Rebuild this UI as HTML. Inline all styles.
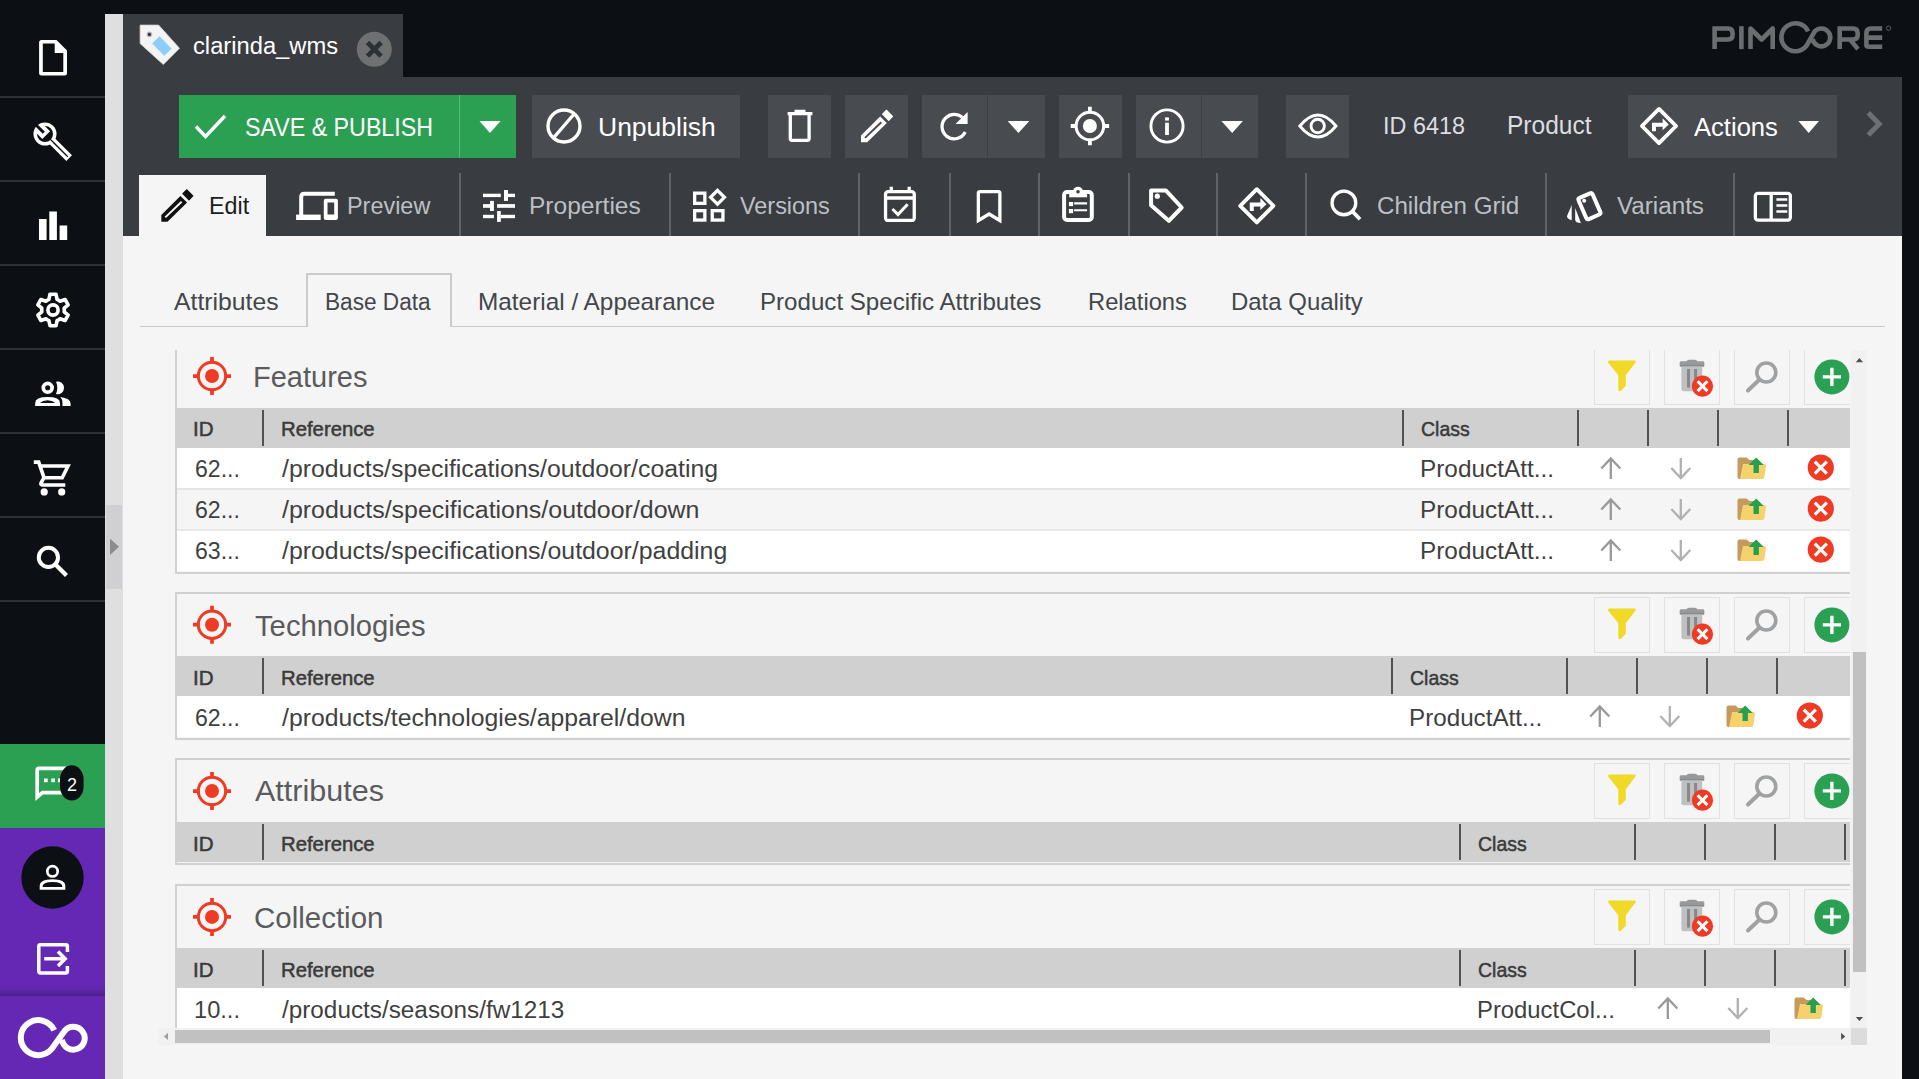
<!DOCTYPE html>
<html><head><meta charset="utf-8">
<style>
*{margin:0;padding:0;box-sizing:border-box}
html,body{width:1919px;height:1079px;overflow:hidden;background:#0c1014;font-family:"Liberation Sans",sans-serif}
.a{position:absolute}
svg{position:absolute;overflow:visible}
.sep{position:absolute;left:0;width:105px;height:2px;background:#2d3134}
.t{position:absolute;white-space:nowrap;transform-origin:0 0}
</style></head><body>
<!-- sidebar -->
<div class="a" id="sb" style="left:0;top:0;width:105px;height:1079px;background:#0c1014">
  <div class="sep" style="top:96px"></div>
  <div class="sep" style="top:180px"></div>
  <div class="sep" style="top:264px"></div>
  <div class="sep" style="top:348px"></div>
  <div class="sep" style="top:432px"></div>
  <div class="sep" style="top:516px"></div>
  <div class="sep" style="top:600px"></div>

<svg style="left:0;top:0" width="105" height="1079" viewBox="0 0 105 1079">
 <g fill="#fff">
  <path fill-rule="evenodd" d="M41.6 39.9H56.5L67 50.4V73.1Q67 75.6 64.5 75.6H41.6Q39.1 75.6 39.1 73.1V42.4Q39.1 39.9 41.6 39.9ZM42.8 43.6V71.9H63.3V52.9H54.7V43.6Z"/>
  <rect x="39" y="219" width="7.6" height="21"/>
  <rect x="49.3" y="211.5" width="7.6" height="28.5"/>
  <rect x="59.6" y="225.5" width="7.6" height="14.5"/>
  <circle cx="44.2" cy="491.9" r="3.6"/><circle cx="61.7" cy="491.9" r="3.6"/>
  <path d="M56 381.8A6.3 6.3 0 1 1 56 393.9Q58.6 387.8 56 381.8Z"/>
  <path fill-rule="evenodd" d="M35.2 406.1V403Q35.2 397.1 47.6 397.1Q60 397.1 60 403V406.1ZM39.8 402.9H55.3Q52 400.3 47.6 400.3Q43 400.3 39.8 402.9Z"/>
  <path d="M60.4 397.1Q70.6 398.5 70.6 403.5V406.1H62.5V403Q62.5 399.5 60.4 397.1Z"/>
 </g>
 <g fill="none" stroke="#fff" stroke-width="3.6">
  <path d="M47.35 300.21 L48.95 299.45 L49.95 294.29 L56.05 294.29 L57.05 299.45 L58.65 300.21 L60.11 301.22 L65.08 299.50 L68.13 304.79 L64.16 308.23 L64.30 310.00 L64.16 311.77 L68.13 315.21 L65.08 320.50 L60.11 318.78 L58.65 319.79 L57.05 320.55 L56.05 325.71 L49.95 325.71 L48.95 320.55 L47.35 319.79 L45.89 318.78 L40.92 320.50 L37.87 315.21 L41.84 311.77 L41.70 310.00 L41.84 308.23 L37.87 304.79 L40.92 299.50 L45.89 301.22Z" stroke-linejoin="round"/>
  <circle cx="53" cy="310" r="5.1"/>
  <circle cx="47.7" cy="387.8" r="4.4" stroke-width="3.7"/>
  <path d="M33.8 462.1H38.7L44 477.7H62.2L68 466H40.2 M44 477.7L41 483Q40.3 485 43 485H65.3"/>
  <circle cx="48.4" cy="557.4" r="9.6" stroke-width="4"/>
  <path d="M55.5 564.5L66.5 575.5" stroke-width="4.2"/>
  <g transform="translate(45 134) rotate(45)">
   <circle r="9.75" stroke-width="3.5"/>
   <rect x="-10" y="-5.5" width="11.7" height="11" fill="#fff" stroke="none"/>
   <rect x="-13" y="-1.5" width="11.3" height="3" fill="#0c1014" stroke="none"/>
   <path d="M9.6 -2.25H32.4V2.25H9.6" stroke-width="3.5"/>
   <path d="M6 0H32.4" stroke="#0c1014" stroke-width="1.1"/>
  </g>
 </g>
</svg>
  <div class="a" style="left:0;top:744px;width:105px;height:84px;background:#2ba052"></div>
  <div class="a" style="left:0;top:828px;width:105px;height:251px;background:#6428b4"></div>

<svg style="left:0;top:744px" width="105" height="335" viewBox="0 744 105 335">
 <g fill="none" stroke="#fff" stroke-width="3.7">
  <path d="M66 768.3H38.9Q37.2 768.3 37.2 770V797L42.5 792.6H62" stroke-linejoin="miter"/>

 </g>
 <g fill="#fff"><rect x="44" y="778.5" width="3.7" height="3.7"/><rect x="51.3" y="778.5" width="3.7" height="3.7"/><rect x="58" y="778.5" width="3.7" height="3.7"/></g>
 <rect x="60" y="765.3" width="23.6" height="35.3" rx="11.8" ry="14" fill="#0c1014"/>
 <circle cx="52.5" cy="877.5" r="31.2" fill="#0c1014"/>
 <circle cx="52.5" cy="871.3" r="5.2" fill="none" stroke="#fff" stroke-width="2.7"/>
 <path fill-rule="evenodd" fill="#fff" d="M39.7 889.7V886Q39.7 879.2 52.5 879.2Q65.3 879.2 65.3 886V889.7ZM42.5 887H62.5Q62.5 882 52.5 882Q42.5 882 42.5 887Z"/>
 <g fill="none" stroke="#fff" stroke-width="3.5">
  <path d="M67.4 952V946.5Q67.4 944.8 65.7 944.8H40.5Q38.8 944.8 38.8 946.5V971.2Q38.8 972.9 40.5 972.9H65.7Q67.4 972.9 67.4 971.2V966"/>
  <path d="M44.2 958.8H65 M58 951.5L65.2 958.8L58 966"/>
 </g>
 <defs><linearGradient id="lg" x1="0" y1="0" x2="0" y2="1"><stop offset="0" stop-color="#6428b4" stop-opacity="0"/><stop offset="1" stop-color="#3e1a70" stop-opacity="0.7"/></linearGradient></defs>
 <rect x="0" y="984" width="105" height="12" fill="url(#lg)"/>
 <g fill="none" stroke="#fff" stroke-width="6">
  <path d="M54.2 1030.3A17.5 17.5 0 1 0 51.7 1048.9L64.5 1031A11.4 11.4 0 1 1 62 1039.7"/>
 </g>
</svg>
<div class="t" style="left:67px;top:775px;font-size:18px;color:#fff">2</div>
</div>
<!-- splitter strip -->
<div class="a" style="left:105px;top:14px;width:18px;height:1065px;background:#dfdfe0"></div>
<div class="a" style="left:106px;top:505px;width:16px;height:84px;background:#d0d0d2"></div>
<svg style="left:0;top:0" width="130" height="600" viewBox="0 0 130 600"><path d="M110 538.8V554.9L119 546.8Z" fill="#8c8c8e"/></svg>
<!-- doc tab -->
<div class="a" style="left:123px;top:14px;width:280px;height:64px;background:#393c40"></div>
<svg style="left:123px;top:14px" width="280" height="64" viewBox="123 14 280 64">
 <path d="M140.1 25.1H158.6L179.5 48.3L163.3 64.5L140.1 43.6Z" fill="#f4f4f4" stroke="#d4d4d4" stroke-width="0.8"/>
 <path d="M159.6 36.2L171.6 48.7L164.2 55.7L152.1 43.6Z" fill="#8ccdf9"/>
 <circle cx="149.4" cy="34.4" r="2.8" fill="#bbb"/><circle cx="149.4" cy="34.4" r="1.6" fill="#333"/>
 <circle cx="374.3" cy="49.3" r="17.5" fill="#6f7071"/>
 <path d="M367.5 42.5L381.1 56.1M381.1 42.5L367.5 56.1" stroke="#2e3134" stroke-width="4.8"/>
</svg>
<!-- toolbar -->
<div class="a" style="left:123px;top:77px;width:1779px;height:159px;background:#393c40"></div>

<!-- toolbar row 1 -->
<div class="a" style="left:179px;top:95px;width:337px;height:63px;background:#2ba052"></div>
<div class="a" style="left:459px;top:95px;width:1px;height:63px;background:#5cba7c"></div>
<div class="a" style="left:532px;top:95px;width:208px;height:63px;background:#484b4f"></div>
<div class="a" style="left:768px;top:95px;width:63px;height:63px;background:#484b4f"></div>
<div class="a" style="left:845px;top:95px;width:63px;height:63px;background:#484b4f"></div>
<div class="a" style="left:922px;top:95px;width:123px;height:63px;background:#484b4f"></div>
<div class="a" style="left:987px;top:95px;width:1px;height:63px;background:#3d4044"></div>
<div class="a" style="left:1059px;top:95px;width:63px;height:63px;background:#484b4f"></div>
<div class="a" style="left:1136px;top:95px;width:122px;height:63px;background:#484b4f"></div>
<div class="a" style="left:1201px;top:95px;width:1px;height:63px;background:#3d4044"></div>
<div class="a" style="left:1286px;top:95px;width:63px;height:63px;background:#484b4f"></div>
<div class="a" style="left:1628px;top:95px;width:209px;height:63px;background:#484b4f"></div>
<svg style="left:123px;top:77px" width="1779" height="159" viewBox="123 77 1779 159">
 <g fill="none" stroke="#fff" stroke-width="3.4">
  <path d="M196 126.5L205.5 136.5L225 116"/>
  <circle cx="564" cy="126" r="16"/><path d="M574.5 113.5L553 138.5"/>
  <path d="M787.6 113.6H812.4M794.5 111.5H805.5M790.3 115V138.5Q790.3 140.3 792 140.3H807.4Q809.1 140.3 809.1 138.5V115" stroke-width="3.3"/>
  
  <g transform="translate(699.7 -79.5)"><path d="M161.3 221.8V215.1L180.4 195.9L187.1 202.4L167.5 221.8Z" fill="#fff" stroke="none"/>
 <path d="M165.3 217.4L181.6 201.7" stroke="#484b4f" stroke-width="2"/>
 <path d="M182.9 193.6L186.9 189.8L192.8 195.8L189 199.8Z" fill="#fff" stroke="#fff" stroke-width="1.2" stroke-linejoin="round"/></g>
  <path d="M964.8 120.5A12.2 12.2 0 1 0 965.2 132" stroke-width="3.3"/>
  <circle cx="1089.9" cy="126" r="13.8" stroke-width="3"/>
  <path d="M1089.9 106.8V113M1089.9 139V145.2M1070.7 126H1077M1102.8 126H1109.1" stroke-width="3.8"/>
  <circle cx="1167" cy="126" r="16.1" stroke-width="2.9"/>
  <path d="M1167 122.7V135" stroke-width="3.8"/>
  <path d="M1299.8 126Q1318 104 1336 126Q1318 148 1299.8 126Z" stroke-width="2.9"/>
  <circle cx="1317.7" cy="126" r="6.7" stroke-width="2.9"/>
  <path d="M1659 108.9L1676.1 126L1659 143.1L1641.9 126Z" stroke-width="3.8" stroke-linejoin="round"/>
  <path d="M1653.95 131.2V124.65H1663.2" stroke-width="4" stroke-linejoin="miter"/>
  <path d="M1868.3 112.8L1879.2 123.9L1868.3 135" stroke="#6e7073" stroke-width="5" stroke-linejoin="miter"/>
 </g>
 <g fill="#fff">
  <path d="M479.5 121H500.6L490 133Z"/>
  <path d="M1007.6 121H1029.3L1018.5 133Z"/>
  <path d="M1221.4 121H1242.9L1232.2 133Z"/>
  <path d="M1798.4 121H1819L1808.7 133Z"/>
  <path d="M967.6 111.9V124H955.5Z"/>
  <circle cx="1089.9" cy="126" r="7"/>
  <rect x="1165.1" y="117.4" width="3.8" height="3.2"/>
  <path d="M1662.6 118.3L1668.7 124.5L1662.6 130.3Z"/>
 </g>
</svg>
<div class="t" style="left:193.24px;top:34px;font-size:24.76px;line-height:24.76px;color:#fff;transform:scaleX(0.9585);">clarinda_wms</div>
<div class="t" style="left:244.78px;top:115px;font-size:25.64px;line-height:25.64px;color:#fff;transform:scaleX(0.9062);">SAVE &amp; PUBLISH</div>
<div class="t" style="left:597.64px;top:114px;font-size:26.45px;line-height:26.45px;color:#fff;transform:scaleX(1.0023);">Unpublish</div>
<div class="t" style="left:1382.84px;top:114px;font-size:24.71px;line-height:24.71px;color:#dcdde0;transform:scaleX(0.9474);">ID 6418</div>
<div class="t" style="left:1507.43px;top:113px;font-size:25.15px;line-height:25.15px;color:#dcdde0;transform:scaleX(0.9759);">Product</div>
<div class="t" style="left:1694.00px;top:115px;font-size:25.73px;line-height:25.73px;color:#fff;transform:scaleX(0.9946);">Actions</div>
<div class="a" style="left:139px;top:175px;width:127px;height:61px;background:#f5f5f5"></div>
<div class="a" style="left:459px;top:173px;width:2px;height:63px;background:#606367"></div>
<div class="a" style="left:669px;top:173px;width:2px;height:63px;background:#606367"></div>
<div class="a" style="left:858px;top:173px;width:2px;height:63px;background:#606367"></div>
<div class="a" style="left:949px;top:173px;width:2px;height:63px;background:#606367"></div>
<div class="a" style="left:1038px;top:173px;width:2px;height:63px;background:#606367"></div>
<div class="a" style="left:1128px;top:173px;width:2px;height:63px;background:#606367"></div>
<div class="a" style="left:1216px;top:173px;width:2px;height:63px;background:#606367"></div>
<div class="a" style="left:1305px;top:173px;width:2px;height:63px;background:#606367"></div>
<div class="a" style="left:1545px;top:173px;width:2px;height:63px;background:#606367"></div>
<div class="a" style="left:1733px;top:173px;width:2px;height:63px;background:#606367"></div>
<svg style="left:0;top:0" width="1919" height="1079" viewBox="0 0 1919 1079">
 <path d="M161.3 221.8V215.1L180.4 195.9L187.1 202.4L167.5 221.8Z" fill="#111"/>
 <path d="M165.3 217.4L181.6 201.7" stroke="#f5f5f5" stroke-width="2"/>
 <path d="M182.9 193.6L186.9 189.8L192.8 195.8L189 199.8Z" fill="#111" stroke="#111" stroke-width="1.2" stroke-linejoin="round"/>
 <g fill="none" stroke="#fff" stroke-width="3.3">
  <path d="M301.2 215V197Q301.2 193.8 304.4 193.8H334.8" stroke-width="4"/>
  
  <rect x="694.65" y="193.15" width="10.2" height="10.2"/>
  <rect x="694.65" y="210.65" width="10.2" height="9.4"/>
  <rect x="712.25" y="210.65" width="10.7" height="9.4"/>
  <path d="M717.5 190.4L724.4 197.3L717.5 204.2L710.6 197.3Z" stroke-linejoin="miter"/>
  <rect x="885.55" y="191.65" width="28.7" height="28.8" rx="2.5"/>
  <path d="M884 198H916 M891.3 186.7V192 M909.2 186.7V192"/>
  <path d="M892.4 209L898 214.5L907.6 204.2" stroke-width="3"/>
  <path d="M978.35 220.5V193.3Q978.35 191.65 980 191.65H998.2Q999.85 191.65 999.85 193.3V220.5L989.1 214Z" stroke-linejoin="miter"/>
  <rect x="1064.1" y="192" width="27.7" height="28" rx="3" stroke-width="4"/>
  <path d="M1074.1 203.4H1087.1M1074.1 210.3H1087.1" stroke-width="2.1"/>
  <path d="M1151.1 190.4H1165.8L1181.7 207.5L1168.8 220.8L1151.1 205.3Z" stroke-width="4" stroke-linejoin="round"/>
  <path d="M1256.8 189.2L1273.4 205.8L1256.8 222.4L1240.2 205.8Z" stroke-width="3.8" stroke-linejoin="round"/>
  <path d="M1251.75 211V204.45H1261" stroke-width="4" stroke-linejoin="miter"/>
  <circle cx="1343.9" cy="202.9" r="11.85"/>
  <path d="M1352.3 211.3L1360 219.3" stroke-width="3.8"/>
  <rect x="-7.65" y="-11.55" width="15.3" height="23.1" rx="2" transform="translate(1589.45 206.2) rotate(-23.5)" stroke-width="4"/>
  <rect x="1755.35" y="193.35" width="35" height="26.7" rx="2.5"/>
  <path d="M1771.2 193V220.5"/>
  <path d="M1776.4 199.5H1787.3M1776.4 205.5H1787.3M1776.4 211.5H1787.3" stroke-width="2.6"/>
 </g>
 <g fill="#fff">
  <rect x="296.1" y="214.6" width="24.6" height="5.4"/><path fill-rule="evenodd" d="M325.7 198.8H336Q337.9 198.8 337.9 200.7V218.1Q337.9 220 336 220H325.7Q323.8 220 323.8 218.1V200.7Q323.8 198.8 325.7 198.8ZM327.5 202.5V214.5H334.2V202.5Z"/>
  <rect x="483" y="193.7" width="17.8" height="3.4"/><rect x="504" y="190" width="4" height="10.9"/><rect x="508" y="193.7" width="7" height="3.4"/>
  <rect x="483" y="204.1" width="7" height="3.7"/><rect x="490" y="200.9" width="3.9" height="10.1"/><rect x="497.1" y="204.1" width="17.9" height="3.7"/>
  <rect x="483" y="214.8" width="10.9" height="3.4"/><rect x="497.1" y="211" width="3.7" height="10.9"/><rect x="500.8" y="214.8" width="14.2" height="3.4"/>
  <rect x="1069.2" y="190" width="17.9" height="7.3"/>
  <circle cx="1078" cy="191.8" r="5.1"/>
  <rect x="1068.9" y="202" width="4.2" height="4.1"/><rect x="1068.9" y="209" width="4.2" height="4.2"/>
  <circle cx="1157.3" cy="196.2" r="2.6"/>
  <path d="M1260.4 198.1L1266.5 204.3L1260.4 210.1Z"/>
  <circle cx="1584.2" cy="200.7" r="2"/>
  <path d="M1571.7 205.1V220.3Q1567 219 1567 216Z"/>
  <path d="M1575.2 208V220Q1575.6 223 1580.9 223Z"/>
 </g>
 <circle cx="1078" cy="191.8" r="1.8" fill="#393c40"/>
</svg>
<div class="t" style="left:208.53px;top:194px;font-size:24.56px;line-height:24.56px;color:#1c1c1c;transform:scaleX(0.9490);">Edit</div>
<div class="t" style="left:347.36px;top:194px;font-size:24.56px;line-height:24.56px;color:#bcc0c5;transform:scaleX(0.9541);">Preview</div>
<div class="t" style="left:529.43px;top:194px;font-size:24.71px;line-height:24.71px;color:#bcc0c5;transform:scaleX(0.9925);">Properties</div>
<div class="t" style="left:740.40px;top:194px;font-size:24.71px;line-height:24.71px;color:#bcc0c5;transform:scaleX(0.9477);">Versions</div>
<div class="t" style="left:1376.89px;top:194px;font-size:24.21px;line-height:24.21px;color:#bcc0c5;transform:scaleX(0.9979);">Children Grid</div>
<div class="t" style="left:1617.20px;top:194px;font-size:24.56px;line-height:24.56px;color:#bcc0c5;transform:scaleX(0.9856);">Variants</div>
<div class="a" id="content" style="left:123px;top:236px;width:1779px;height:843px;background:#f5f5f5"></div>
<div class="a" style="left:140px;top:326px;width:1745px;height:1px;background:#c9c9c9"></div>
<div class="a" style="left:306px;top:273px;width:146px;height:54px;border:2px solid #cbcbcb;border-bottom:none;background:#f5f5f5"></div>
<div class="t" style="left:174.00px;top:290px;font-size:24.71px;line-height:24.71px;color:#43464a;transform:scaleX(1.0023);">Attributes</div>
<div class="t" style="left:324.87px;top:290px;font-size:24.56px;line-height:24.56px;color:#43464a;transform:scaleX(0.9217);">Base Data</div>
<div class="t" style="left:477.97px;top:290px;font-size:24.71px;line-height:24.71px;color:#43464a;transform:scaleX(0.9861);">Material / Appearance</div>
<div class="t" style="left:760.19px;top:290px;font-size:24.71px;line-height:24.71px;color:#43464a;transform:scaleX(0.9758);">Product Specific Attributes</div>
<div class="t" style="left:1088.04px;top:290px;font-size:24.71px;line-height:24.71px;color:#43464a;transform:scaleX(0.9607);">Relations</div>
<div class="t" style="left:1231.46px;top:290px;font-size:24.71px;line-height:24.71px;color:#43464a;transform:scaleX(0.9697);">Data Quality</div>
<div class="a" style="left:0;top:0;width:1919px;height:1079px;clip-path:inset(350px 69px 51px 158px)">
<div class="a" style="left:175px;top:344px;width:1690px;height:230px;border:2px solid #d0d0d0;border-right:none"></div>
<div class="a" style="left:1594px;top:349px;width:56px;height:55.5px;border:1.5px solid #e1e1e1"></div>
<div class="a" style="left:1664px;top:349px;width:56px;height:55.5px;border:1.5px solid #e1e1e1"></div>
<div class="a" style="left:1734px;top:349px;width:56px;height:55.5px;border:1.5px solid #e1e1e1"></div>
<div class="a" style="left:1804px;top:349px;width:56px;height:55.5px;border:1.5px solid #e1e1e1"></div>
<div class="a" style="left:177px;top:408px;width:1690px;height:40px;background:#d0d0d0"></div>
<div class="a" style="left:262px;top:410px;width:2px;height:36px;background:#505254"></div>
<div class="a" style="left:1402px;top:410px;width:2px;height:36px;background:#505254"></div>
<div class="a" style="left:1577px;top:410px;width:2px;height:36px;background:#505254"></div>
<div class="a" style="left:1647px;top:410px;width:2px;height:36px;background:#505254"></div>
<div class="a" style="left:1717px;top:410px;width:2px;height:36px;background:#505254"></div>
<div class="a" style="left:1787px;top:410px;width:2px;height:36px;background:#505254"></div>
<div class="a" style="left:177px;top:448px;width:1690px;height:41px;background:#ffffff"></div>
<div class="a" style="left:177px;top:489px;width:1690px;height:41px;background:#f5f5f5"></div>
<div class="a" style="left:177px;top:488px;width:1690px;height:2px;background:#e6e6e6"></div>
<div class="a" style="left:177px;top:530px;width:1690px;height:41px;background:#ffffff"></div>
<div class="a" style="left:177px;top:529px;width:1690px;height:2px;background:#e6e6e6"></div>
<div class="t" style="left:252.74px;top:363px;font-size:29.07px;line-height:29.07px;color:#5a5b5d;transform:scaleX(0.9979);">Features</div>
<div class="t" style="left:192.95px;top:419px;font-size:20.35px;line-height:20.35px;color:#3a3a3a;transform:scaleX(1.0093);-webkit-text-stroke:0.5px #3a3a3a;">ID</div>
<div class="t" style="left:280.95px;top:419px;font-size:20.35px;line-height:20.35px;color:#3a3a3a;transform:scaleX(0.9979);-webkit-text-stroke:0.5px #3a3a3a;">Reference</div>
<div class="t" style="left:1420.57px;top:419px;font-size:20.06px;line-height:20.06px;color:#3a3a3a;transform:scaleX(0.9723);-webkit-text-stroke:0.5px #3a3a3a;">Class</div>
<div class="t" style="left:194.54px;top:457px;font-size:24.36px;line-height:24.36px;color:#3f3f3f;transform:scaleX(0.9475);">62...</div>
<div class="t" style="left:281.80px;top:457px;font-size:24.41px;line-height:24.41px;color:#3f3f3f;transform:scaleX(1.0171);">/products/specifications/outdoor/coating</div>
<div class="t" style="left:1419.55px;top:457px;font-size:24.71px;line-height:24.71px;color:#3f3f3f;transform:scaleX(0.9858);">ProductAtt...</div>
<div class="t" style="left:194.54px;top:498px;font-size:24.36px;line-height:24.36px;color:#3f3f3f;transform:scaleX(0.9475);">62...</div>
<div class="t" style="left:281.80px;top:498px;font-size:24.41px;line-height:24.41px;color:#3f3f3f;transform:scaleX(1.0223);">/products/specifications/outdoor/down</div>
<div class="t" style="left:1419.55px;top:498px;font-size:24.71px;line-height:24.71px;color:#3f3f3f;transform:scaleX(0.9858);">ProductAtt...</div>
<div class="t" style="left:194.54px;top:539px;font-size:24.36px;line-height:24.36px;color:#3f3f3f;transform:scaleX(0.9475);">63...</div>
<div class="t" style="left:281.80px;top:539px;font-size:24.41px;line-height:24.41px;color:#3f3f3f;transform:scaleX(1.0192);">/products/specifications/outdoor/padding</div>
<div class="t" style="left:1419.55px;top:539px;font-size:24.71px;line-height:24.71px;color:#3f3f3f;transform:scaleX(0.9858);">ProductAtt...</div>
<svg style="left:0;top:0" width="1919" height="1079" viewBox="0 0 1919 1079">
 <g transform="translate(212 376.0)"><circle r="13.7" fill="none" stroke="#ef3b24" stroke-width="2.95"/><circle r="7" fill="#ef3b24"/><path d="M0 -19V-12.5M0 12.5V19M-19 0H-12.5M12.5 0H19" stroke="#ef3b24" stroke-width="3.75"/></g>
 <path transform="translate(0 349.0)" d="M1609.2 11.5H1634.6Q1636.6 11.9 1635.3 13.8L1625.8 26.2V36.8L1620.6 42Q1618.3 43 1618.3 40.6V26.2L1608.3 13.8Q1607.4 11.9 1609.2 11.5Z" fill="#f0da27"/>
 <g transform="translate(0 349.0)"><path d="M1686.6 12.2Q1687 10.7 1689 10.7H1695Q1697 10.7 1697.4 12.2H1703.2Q1704.3 12.5 1704.3 13.6V16.6H1679.7V13.6Q1679.7 12.5 1680.8 12.2Z" fill="#98999b"/><rect x="1679.8" y="16.3" width="24.4" height="1.3" fill="#6f7072"/><path d="M1681.4 17.6H1702.2V40.3Q1702.2 42.3 1700.2 42.3H1683.4Q1681.4 42.3 1681.4 40.3Z" fill="#bfc0c2"/><rect x="1687" y="20" width="3" height="18.6" fill="#87888a"/><rect x="1694.1" y="20" width="3" height="18.6" fill="#87888a"/><circle cx="1702.5" cy="37.2" r="10.6" fill="#ef3b24"/><path d="M1697.6 32.3L1707.4 42.1M1707.4 32.3L1697.6 42.1" stroke="#fff" stroke-width="3"/></g>
 <g transform="translate(0 349.0)" fill="none" stroke="#a0a1a3"><circle cx="1766.3" cy="23.5" r="9.5" stroke-width="3.6"/><path d="M1758.8 31.2L1748 41.5" stroke-width="4" stroke-linecap="round"/></g>
 <g transform="translate(0 349.0)"><circle cx="1831.9" cy="27.9" r="17.5" fill="#2aa052"/><path d="M1831.9 18.8V37M1822.8 27.9H1841" stroke="#fff" stroke-width="3.4"/></g>
 <g transform="translate(0 448)" fill="none" stroke-width="2.3"><path d="M1610.8 31V10.5M1601.3 20.5L1610.8 10.5L1620.3 20.5" stroke="#98999b"/><path d="M1680.8 10V30M1671.3 20L1680.8 30L1690.3 20" stroke="#b0b1b3"/><g stroke="none"><path d="M1737.5 11.5Q1737.5 9.5 1739.5 9.5H1746.5 L1749.5 12H1757.5 V27Q1757.5 31 1755.5 31H1739.5 Q1737.5 31 1737.5 29Z" fill="#c49a5e"/><path d="M1743.0 16H1764.0 Q1766.0 16 1766.0 18L1764.5 28.5Q1764.1 31 1762.0 31H1740.0 Z" fill="#f7d16c"/><path d="M1756.2 9.5L1763.7 16.9H1758.9 V25H1753.5 V16.9H1748.6 Z" fill="#27a04d"/></g><circle cx="1820.8" cy="19.6" r="13.1" fill="#ef3b24" stroke="none"/><path d="M1814.8 13.6L1826.8 25.6M1826.8 13.6L1814.8 25.6" stroke="#fff" stroke-width="3.2"/></g>
 <g transform="translate(0 489)" fill="none" stroke-width="2.3"><path d="M1610.8 31V10.5M1601.3 20.5L1610.8 10.5L1620.3 20.5" stroke="#98999b"/><path d="M1680.8 10V30M1671.3 20L1680.8 30L1690.3 20" stroke="#b0b1b3"/><g stroke="none"><path d="M1737.5 11.5Q1737.5 9.5 1739.5 9.5H1746.5 L1749.5 12H1757.5 V27Q1757.5 31 1755.5 31H1739.5 Q1737.5 31 1737.5 29Z" fill="#c49a5e"/><path d="M1743.0 16H1764.0 Q1766.0 16 1766.0 18L1764.5 28.5Q1764.1 31 1762.0 31H1740.0 Z" fill="#f7d16c"/><path d="M1756.2 9.5L1763.7 16.9H1758.9 V25H1753.5 V16.9H1748.6 Z" fill="#27a04d"/></g><circle cx="1820.8" cy="19.6" r="13.1" fill="#ef3b24" stroke="none"/><path d="M1814.8 13.6L1826.8 25.6M1826.8 13.6L1814.8 25.6" stroke="#fff" stroke-width="3.2"/></g>
 <g transform="translate(0 530)" fill="none" stroke-width="2.3"><path d="M1610.8 31V10.5M1601.3 20.5L1610.8 10.5L1620.3 20.5" stroke="#98999b"/><path d="M1680.8 10V30M1671.3 20L1680.8 30L1690.3 20" stroke="#b0b1b3"/><g stroke="none"><path d="M1737.5 11.5Q1737.5 9.5 1739.5 9.5H1746.5 L1749.5 12H1757.5 V27Q1757.5 31 1755.5 31H1739.5 Q1737.5 31 1737.5 29Z" fill="#c49a5e"/><path d="M1743.0 16H1764.0 Q1766.0 16 1766.0 18L1764.5 28.5Q1764.1 31 1762.0 31H1740.0 Z" fill="#f7d16c"/><path d="M1756.2 9.5L1763.7 16.9H1758.9 V25H1753.5 V16.9H1748.6 Z" fill="#27a04d"/></g><circle cx="1820.8" cy="19.6" r="13.1" fill="#ef3b24" stroke="none"/><path d="M1814.8 13.6L1826.8 25.6M1826.8 13.6L1814.8 25.6" stroke="#fff" stroke-width="3.2"/></g>
</svg>
<div class="a" style="left:175px;top:592px;width:1690px;height:148px;border:2px solid #d0d0d0;border-right:none"></div>
<div class="a" style="left:1594px;top:597px;width:56px;height:55.5px;border:1.5px solid #e1e1e1"></div>
<div class="a" style="left:1664px;top:597px;width:56px;height:55.5px;border:1.5px solid #e1e1e1"></div>
<div class="a" style="left:1734px;top:597px;width:56px;height:55.5px;border:1.5px solid #e1e1e1"></div>
<div class="a" style="left:1804px;top:597px;width:56px;height:55.5px;border:1.5px solid #e1e1e1"></div>
<div class="a" style="left:177px;top:656px;width:1690px;height:40px;background:#d0d0d0"></div>
<div class="a" style="left:262px;top:658px;width:2px;height:36px;background:#505254"></div>
<div class="a" style="left:1391px;top:658px;width:2px;height:36px;background:#505254"></div>
<div class="a" style="left:1566px;top:658px;width:2px;height:36px;background:#505254"></div>
<div class="a" style="left:1636px;top:658px;width:2px;height:36px;background:#505254"></div>
<div class="a" style="left:1706px;top:658px;width:2px;height:36px;background:#505254"></div>
<div class="a" style="left:1776px;top:658px;width:2px;height:36px;background:#505254"></div>
<div class="a" style="left:177px;top:696px;width:1690px;height:41px;background:#ffffff"></div>
<div class="t" style="left:254.80px;top:611px;font-size:30.09px;line-height:30.09px;color:#5a5b5d;transform:scaleX(0.9720);">Technologies</div>
<div class="t" style="left:192.95px;top:668px;font-size:20.35px;line-height:20.35px;color:#3a3a3a;transform:scaleX(1.0093);-webkit-text-stroke:0.5px #3a3a3a;">ID</div>
<div class="t" style="left:280.95px;top:668px;font-size:20.35px;line-height:20.35px;color:#3a3a3a;transform:scaleX(0.9979);-webkit-text-stroke:0.5px #3a3a3a;">Reference</div>
<div class="t" style="left:1409.57px;top:668px;font-size:20.06px;line-height:20.06px;color:#3a3a3a;transform:scaleX(0.9723);-webkit-text-stroke:0.5px #3a3a3a;">Class</div>
<div class="t" style="left:194.54px;top:706px;font-size:24.36px;line-height:24.36px;color:#3f3f3f;transform:scaleX(0.9475);">62...</div>
<div class="t" style="left:281.80px;top:706px;font-size:24.41px;line-height:24.41px;color:#3f3f3f;transform:scaleX(1.0149);">/products/technologies/apparel/down</div>
<div class="t" style="left:1408.55px;top:706px;font-size:24.71px;line-height:24.71px;color:#3f3f3f;transform:scaleX(0.9798);">ProductAtt...</div>
<svg style="left:0;top:0" width="1919" height="1079" viewBox="0 0 1919 1079">
 <g transform="translate(212 624.7)"><circle r="13.7" fill="none" stroke="#ef3b24" stroke-width="2.95"/><circle r="7" fill="#ef3b24"/><path d="M0 -19V-12.5M0 12.5V19M-19 0H-12.5M12.5 0H19" stroke="#ef3b24" stroke-width="3.75"/></g>
 <path transform="translate(0 597.0)" d="M1609.2 11.5H1634.6Q1636.6 11.9 1635.3 13.8L1625.8 26.2V36.8L1620.6 42Q1618.3 43 1618.3 40.6V26.2L1608.3 13.8Q1607.4 11.9 1609.2 11.5Z" fill="#f0da27"/>
 <g transform="translate(0 597.0)"><path d="M1686.6 12.2Q1687 10.7 1689 10.7H1695Q1697 10.7 1697.4 12.2H1703.2Q1704.3 12.5 1704.3 13.6V16.6H1679.7V13.6Q1679.7 12.5 1680.8 12.2Z" fill="#98999b"/><rect x="1679.8" y="16.3" width="24.4" height="1.3" fill="#6f7072"/><path d="M1681.4 17.6H1702.2V40.3Q1702.2 42.3 1700.2 42.3H1683.4Q1681.4 42.3 1681.4 40.3Z" fill="#bfc0c2"/><rect x="1687" y="20" width="3" height="18.6" fill="#87888a"/><rect x="1694.1" y="20" width="3" height="18.6" fill="#87888a"/><circle cx="1702.5" cy="37.2" r="10.6" fill="#ef3b24"/><path d="M1697.6 32.3L1707.4 42.1M1707.4 32.3L1697.6 42.1" stroke="#fff" stroke-width="3"/></g>
 <g transform="translate(0 597.0)" fill="none" stroke="#a0a1a3"><circle cx="1766.3" cy="23.5" r="9.5" stroke-width="3.6"/><path d="M1758.8 31.2L1748 41.5" stroke-width="4" stroke-linecap="round"/></g>
 <g transform="translate(0 597.0)"><circle cx="1831.9" cy="27.9" r="17.5" fill="#2aa052"/><path d="M1831.9 18.8V37M1822.8 27.9H1841" stroke="#fff" stroke-width="3.4"/></g>
 <g transform="translate(0 696)" fill="none" stroke-width="2.3"><path d="M1599.8 31V10.5M1590.3 20.5L1599.8 10.5L1609.3 20.5" stroke="#98999b"/><path d="M1669.8 10V30M1660.3 20L1669.8 30L1679.3 20" stroke="#b0b1b3"/><g stroke="none"><path d="M1726.5 11.5Q1726.5 9.5 1728.5 9.5H1735.5 L1738.5 12H1746.5 V27Q1746.5 31 1744.5 31H1728.5 Q1726.5 31 1726.5 29Z" fill="#c49a5e"/><path d="M1732.0 16H1753.0 Q1755.0 16 1755.0 18L1753.5 28.5Q1753.1 31 1751.0 31H1729.0 Z" fill="#f7d16c"/><path d="M1745.2 9.5L1752.7 16.9H1747.9 V25H1742.5 V16.9H1737.6 Z" fill="#27a04d"/></g><circle cx="1809.8" cy="19.6" r="13.1" fill="#ef3b24" stroke="none"/><path d="M1803.8 13.6L1815.8 25.6M1815.8 13.6L1803.8 25.6" stroke="#fff" stroke-width="3.2"/></g>
</svg>
<div class="a" style="left:175px;top:758px;width:1690px;height:107px;border:2px solid #d0d0d0;border-right:none"></div>
<div class="a" style="left:1594px;top:763px;width:56px;height:55.5px;border:1.5px solid #e1e1e1"></div>
<div class="a" style="left:1664px;top:763px;width:56px;height:55.5px;border:1.5px solid #e1e1e1"></div>
<div class="a" style="left:1734px;top:763px;width:56px;height:55.5px;border:1.5px solid #e1e1e1"></div>
<div class="a" style="left:1804px;top:763px;width:56px;height:55.5px;border:1.5px solid #e1e1e1"></div>
<div class="a" style="left:177px;top:822px;width:1690px;height:40px;background:#d0d0d0"></div>
<div class="a" style="left:262px;top:824px;width:2px;height:36px;background:#505254"></div>
<div class="a" style="left:1459px;top:824px;width:2px;height:36px;background:#505254"></div>
<div class="a" style="left:1634px;top:824px;width:2px;height:36px;background:#505254"></div>
<div class="a" style="left:1704px;top:824px;width:2px;height:36px;background:#505254"></div>
<div class="a" style="left:1774px;top:824px;width:2px;height:36px;background:#505254"></div>
<div class="a" style="left:1844px;top:824px;width:2px;height:36px;background:#505254"></div>
<div class="t" style="left:254.80px;top:777px;font-size:28.63px;line-height:28.63px;color:#5a5b5d;transform:scaleX(1.0666);">Attributes</div>
<div class="t" style="left:192.95px;top:834px;font-size:20.35px;line-height:20.35px;color:#3a3a3a;transform:scaleX(1.0093);-webkit-text-stroke:0.5px #3a3a3a;">ID</div>
<div class="t" style="left:280.95px;top:834px;font-size:20.35px;line-height:20.35px;color:#3a3a3a;transform:scaleX(0.9979);-webkit-text-stroke:0.5px #3a3a3a;">Reference</div>
<div class="t" style="left:1477.57px;top:834px;font-size:20.06px;line-height:20.06px;color:#3a3a3a;transform:scaleX(0.9723);-webkit-text-stroke:0.5px #3a3a3a;">Class</div>
<svg style="left:0;top:0" width="1919" height="1079" viewBox="0 0 1919 1079">
 <g transform="translate(212 791.0)"><circle r="13.7" fill="none" stroke="#ef3b24" stroke-width="2.95"/><circle r="7" fill="#ef3b24"/><path d="M0 -19V-12.5M0 12.5V19M-19 0H-12.5M12.5 0H19" stroke="#ef3b24" stroke-width="3.75"/></g>
 <path transform="translate(0 763.0)" d="M1609.2 11.5H1634.6Q1636.6 11.9 1635.3 13.8L1625.8 26.2V36.8L1620.6 42Q1618.3 43 1618.3 40.6V26.2L1608.3 13.8Q1607.4 11.9 1609.2 11.5Z" fill="#f0da27"/>
 <g transform="translate(0 763.0)"><path d="M1686.6 12.2Q1687 10.7 1689 10.7H1695Q1697 10.7 1697.4 12.2H1703.2Q1704.3 12.5 1704.3 13.6V16.6H1679.7V13.6Q1679.7 12.5 1680.8 12.2Z" fill="#98999b"/><rect x="1679.8" y="16.3" width="24.4" height="1.3" fill="#6f7072"/><path d="M1681.4 17.6H1702.2V40.3Q1702.2 42.3 1700.2 42.3H1683.4Q1681.4 42.3 1681.4 40.3Z" fill="#bfc0c2"/><rect x="1687" y="20" width="3" height="18.6" fill="#87888a"/><rect x="1694.1" y="20" width="3" height="18.6" fill="#87888a"/><circle cx="1702.5" cy="37.2" r="10.6" fill="#ef3b24"/><path d="M1697.6 32.3L1707.4 42.1M1707.4 32.3L1697.6 42.1" stroke="#fff" stroke-width="3"/></g>
 <g transform="translate(0 763.0)" fill="none" stroke="#a0a1a3"><circle cx="1766.3" cy="23.5" r="9.5" stroke-width="3.6"/><path d="M1758.8 31.2L1748 41.5" stroke-width="4" stroke-linecap="round"/></g>
 <g transform="translate(0 763.0)"><circle cx="1831.9" cy="27.9" r="17.5" fill="#2aa052"/><path d="M1831.9 18.8V37M1822.8 27.9H1841" stroke="#fff" stroke-width="3.4"/></g>
</svg>
<div class="a" style="left:175px;top:884px;width:1690px;height:148px;border:2px solid #d0d0d0;border-right:none"></div>
<div class="a" style="left:1594px;top:889px;width:56px;height:55.5px;border:1.5px solid #e1e1e1"></div>
<div class="a" style="left:1664px;top:889px;width:56px;height:55.5px;border:1.5px solid #e1e1e1"></div>
<div class="a" style="left:1734px;top:889px;width:56px;height:55.5px;border:1.5px solid #e1e1e1"></div>
<div class="a" style="left:1804px;top:889px;width:56px;height:55.5px;border:1.5px solid #e1e1e1"></div>
<div class="a" style="left:177px;top:948px;width:1690px;height:40px;background:#d0d0d0"></div>
<div class="a" style="left:262px;top:950px;width:2px;height:36px;background:#505254"></div>
<div class="a" style="left:1459px;top:950px;width:2px;height:36px;background:#505254"></div>
<div class="a" style="left:1634px;top:950px;width:2px;height:36px;background:#505254"></div>
<div class="a" style="left:1704px;top:950px;width:2px;height:36px;background:#505254"></div>
<div class="a" style="left:1774px;top:950px;width:2px;height:36px;background:#505254"></div>
<div class="a" style="left:1844px;top:950px;width:2px;height:36px;background:#505254"></div>
<div class="a" style="left:177px;top:988px;width:1690px;height:41px;background:#ffffff"></div>
<div class="t" style="left:253.77px;top:903px;font-size:30.37px;line-height:30.37px;color:#5a5b5d;transform:scaleX(0.9707);">Collection</div>
<div class="t" style="left:192.95px;top:960px;font-size:20.35px;line-height:20.35px;color:#3a3a3a;transform:scaleX(1.0093);-webkit-text-stroke:0.5px #3a3a3a;">ID</div>
<div class="t" style="left:280.95px;top:960px;font-size:20.35px;line-height:20.35px;color:#3a3a3a;transform:scaleX(0.9979);-webkit-text-stroke:0.5px #3a3a3a;">Reference</div>
<div class="t" style="left:1477.57px;top:960px;font-size:20.06px;line-height:20.06px;color:#3a3a3a;transform:scaleX(0.9723);-webkit-text-stroke:0.5px #3a3a3a;">Class</div>
<div class="t" style="left:193.50px;top:998px;font-size:24.71px;line-height:24.71px;color:#3f3f3f;transform:scaleX(0.9567);">10...</div>
<div class="t" style="left:281.80px;top:998px;font-size:24.41px;line-height:24.41px;color:#3f3f3f;transform:scaleX(0.9956);">/products/seasons/fw1213</div>
<div class="t" style="left:1476.55px;top:998px;font-size:24.71px;line-height:24.71px;color:#3f3f3f;transform:scaleX(0.9650);">ProductCol...</div>
<svg style="left:0;top:0" width="1919" height="1079" viewBox="0 0 1919 1079">
 <g transform="translate(212 916.9)"><circle r="13.7" fill="none" stroke="#ef3b24" stroke-width="2.95"/><circle r="7" fill="#ef3b24"/><path d="M0 -19V-12.5M0 12.5V19M-19 0H-12.5M12.5 0H19" stroke="#ef3b24" stroke-width="3.75"/></g>
 <path transform="translate(0 889.0)" d="M1609.2 11.5H1634.6Q1636.6 11.9 1635.3 13.8L1625.8 26.2V36.8L1620.6 42Q1618.3 43 1618.3 40.6V26.2L1608.3 13.8Q1607.4 11.9 1609.2 11.5Z" fill="#f0da27"/>
 <g transform="translate(0 889.0)"><path d="M1686.6 12.2Q1687 10.7 1689 10.7H1695Q1697 10.7 1697.4 12.2H1703.2Q1704.3 12.5 1704.3 13.6V16.6H1679.7V13.6Q1679.7 12.5 1680.8 12.2Z" fill="#98999b"/><rect x="1679.8" y="16.3" width="24.4" height="1.3" fill="#6f7072"/><path d="M1681.4 17.6H1702.2V40.3Q1702.2 42.3 1700.2 42.3H1683.4Q1681.4 42.3 1681.4 40.3Z" fill="#bfc0c2"/><rect x="1687" y="20" width="3" height="18.6" fill="#87888a"/><rect x="1694.1" y="20" width="3" height="18.6" fill="#87888a"/><circle cx="1702.5" cy="37.2" r="10.6" fill="#ef3b24"/><path d="M1697.6 32.3L1707.4 42.1M1707.4 32.3L1697.6 42.1" stroke="#fff" stroke-width="3"/></g>
 <g transform="translate(0 889.0)" fill="none" stroke="#a0a1a3"><circle cx="1766.3" cy="23.5" r="9.5" stroke-width="3.6"/><path d="M1758.8 31.2L1748 41.5" stroke-width="4" stroke-linecap="round"/></g>
 <g transform="translate(0 889.0)"><circle cx="1831.9" cy="27.9" r="17.5" fill="#2aa052"/><path d="M1831.9 18.8V37M1822.8 27.9H1841" stroke="#fff" stroke-width="3.4"/></g>
 <g transform="translate(0 988)" fill="none" stroke-width="2.3"><path d="M1667.8 31V10.5M1658.3 20.5L1667.8 10.5L1677.3 20.5" stroke="#98999b"/><path d="M1737.8 10V30M1728.3 20L1737.8 30L1747.3 20" stroke="#b0b1b3"/><g stroke="none"><path d="M1794.5 11.5Q1794.5 9.5 1796.5 9.5H1803.5 L1806.5 12H1814.5 V27Q1814.5 31 1812.5 31H1796.5 Q1794.5 31 1794.5 29Z" fill="#c49a5e"/><path d="M1800.0 16H1821.0 Q1823.0 16 1823.0 18L1821.5 28.5Q1821.1 31 1819.0 31H1797.0 Z" fill="#f7d16c"/><path d="M1813.2 9.5L1820.7 16.9H1815.9 V25H1810.5 V16.9H1805.6 Z" fill="#27a04d"/></g></g>
</svg>
</div>
<div class="a" style="left:1851px;top:350px;width:16px;height:678px;background:#f1f1f1"></div>
<div class="a" style="left:1853px;top:652px;width:13px;height:320px;background:#c1c1c1"></div>
<div class="a" style="left:158px;top:1028px;width:1693px;height:17px;background:#f1f1f1"></div>
<div class="a" style="left:175px;top:1030px;width:1595px;height:13px;background:#c1c1c1"></div>
<div class="a" style="left:1851px;top:1028px;width:16px;height:17px;background:#dcdcdc"></div>
<svg style="left:0;top:0" width="1919" height="1079" viewBox="0 0 1919 1079" fill="#505050">
 <path d="M1855.8 362.2H1863.1L1859.4 358Z"/>
 <path d="M1855.8 1016.9H1863.1L1859.4 1021.1Z"/>
 <path d="M1841.1 1032.8V1039.9L1845.2 1036.4Z"/>
 <path d="M168 1032.8V1039.9L163.8 1036.4Z" fill="#a0a0a0"/>
</svg>
<svg style="left:0;top:0" width="1919" height="80" viewBox="0 0 1919 80" fill="none" stroke="#6b6e71" stroke-width="4.6">
 <path d="M1714.6 49.1V28.5H1728Q1732.6 28.5 1732.6 33.5V34.5Q1732.6 39.5 1728 39.5H1715"/>
 <path d="M1741.4 26.2V49.1"/>
 <path d="M1750.5 49.1V28.5L1761.6 39.5L1772.7 28.5V49.1" stroke-linejoin="round"/>
 <path d="M1808.1 31.4A14 14 0 1 0 1806.1 46.3L1814.6 31.6A8.9 8.9 0 1 1 1812.6 38.85"/>
 <path d="M1839.7 49.1V28.5H1853Q1857.7 28.5 1857.7 33.5V34.5Q1857.7 39.5 1853 39.5H1840M1850 39.5L1858 49.1"/>
 <path d="M1882.2 28.5H1871Q1866.4 28.5 1866.4 33V44.5Q1866.4 46.8 1868.7 46.8H1882.2M1866.4 37.6H1882.2"/>
 <circle cx="1888.6" cy="28.2" r="2.2" stroke-width="0.8"/>
</svg>
</body></html>
